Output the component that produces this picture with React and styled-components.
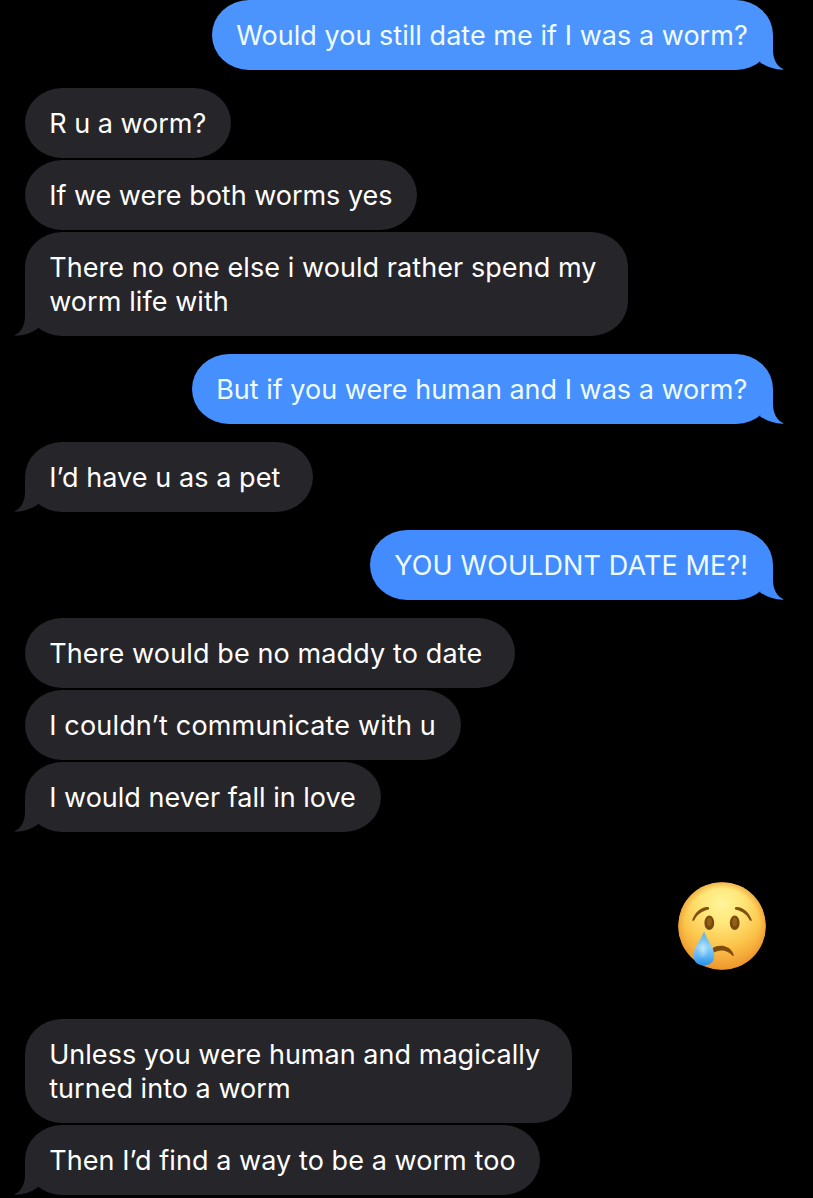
import React from 'react';
import styled, { createGlobalStyle } from 'styled-components';

const GlobalStyle = createGlobalStyle`
  body {
    margin: 0;
    background: #000;
    overflow: hidden;
  }
`;

const Thread = styled.main`
  display: flex;
  flex-direction: column;
  gap: 18px;
  box-sizing: border-box;
  width: 813px;
  height: 1198px;
  padding: 0 40px 0 25px;
  background: #000;
  overflow: hidden;
  font-family: Inter, 'Liberation Sans', sans-serif;
`;

const Group = styled.section`
  display: flex;
  flex-direction: column;
  gap: 2px;
  align-items: ${(props) => (props.$sent ? 'flex-end' : 'flex-start')};
`;

const Bubble = styled.div`
  position: relative;
  box-sizing: border-box;
  width: ${(props) => props.$width}px;
  padding: 19px 0 17px 24.2px;
  border-radius: 37px / 35px;
  background: ${(props) => props.$color};
  color: ${(props) => (props.$sent ? '#effcff' : '#fff')};
`;

const Text = styled.p`
  margin: 0;
  font-size: 27px;
  line-height: 34px;
  letter-spacing: ${(props) => props.$spacing || 0}px;
  white-space: pre;
`;

const TailShape = styled.svg`
  position: absolute;
  bottom: 0;
  ${(props) => (props.$sent ? 'right: -11px;' : 'left: -11px; transform: scaleX(-1);')}
`;

const Reaction = styled.div`
  display: flex;
  align-items: center;
  justify-content: flex-end;
  height: 187px;
  margin: -18px 0;
  padding-right: 7px;
`;

const Tail = ({ sent, color }) => (
  <TailShape $sent={sent} width='34' height='35' viewBox='0 0 34 35'>
    <path d='M10 0H23V15C23 23 26 31 34 34.6C26 35 18 32.6 10.2 27.4Z' fill={color} />
  </TailShape>
);

const CryingFace = () => (
  <svg width='88' height='88' viewBox='0 0 88 88' role='img' aria-label='Crying face'>
    <defs>
      <radialGradient id='face' cx='44' cy='22' r='68' gradientUnits='userSpaceOnUse'>
        <stop offset='0' stopColor='#fff59a' />
        <stop offset='0.3' stopColor='#ffe678' />
        <stop offset='0.62' stopColor='#fcc54c' />
        <stop offset='1' stopColor='#ec9228' />
      </radialGradient>
      <radialGradient id='rim' cx='44' cy='44' r='44' gradientUnits='userSpaceOnUse'>
        <stop offset='0.84' stopColor='#f0a030' stopOpacity='0' />
        <stop offset='1' stopColor='#e8962c' stopOpacity='0.6' />
      </radialGradient>
      <linearGradient id='tear' x1='0' y1='0' x2='0' y2='1'>
        <stop offset='0' stopColor='#5db0e4' />
        <stop offset='0.45' stopColor='#8fd2f8' />
        <stop offset='0.75' stopColor='#5ab2f4' />
        <stop offset='1' stopColor='#2b8ce4' />
      </linearGradient>
      <radialGradient id='shine' cx='0.5' cy='0.5' r='0.5'>
        <stop offset='0' stopColor='#d3f2ff' stopOpacity='0.8' />
        <stop offset='1' stopColor='#a9e0fc' stopOpacity='0' />
      </radialGradient>
    </defs>
    <circle cx='44' cy='44' r='43.8' fill='url(#face)' />
    <circle cx='44' cy='44' r='43.8' fill='url(#rim)' />
    <path d='M14.2 38C17 30 22.5 25.5 29.5 25C31.5 25 31.7 27.3 30 27.8C24 29.3 19.5 32 16.3 38.2C15.5 39.2 14 39 14.2 38Z' fill='#80500f' />
    <path d='M73.8 38C71 30 65.5 25.5 58.5 25C56.5 25 56.3 27.3 58 27.8C64 29.3 68.5 32 71.7 38.2C72.5 39.2 74 39 73.8 38Z' fill='#80500f' />
    <ellipse cx='31.3' cy='40.8' rx='4.9' ry='7.3' fill='#78490d' />
    <ellipse cx='56.7' cy='40.8' rx='4.9' ry='7.3' fill='#78490d' />
    <ellipse cx='31.3' cy='39.8' rx='2.4' ry='4.4' fill='#93601a' />
    <ellipse cx='56.7' cy='39.8' rx='2.4' ry='4.4' fill='#93601a' />
    <path d='M34 67C38 62.5 52 61.5 55.8 73C56 74 55 74.3 54.3 73.6C49 67.5 41 67.2 35 71Z' fill='#7e4b0c' />
    <path d='M26 49.5C23 58 15.5 65 15.5 73.5C15.5 80 20 83.5 26 83.5C32 83.5 36.3 80 36.3 73.5C36.3 65 29 58 26 49.5Z' fill='url(#tear)' />
    <ellipse cx='25' cy='67' rx='6' ry='10' fill='url(#shine)' />
  </svg>
);

const Message = ({ sent, tail, color = '#26252a', width, spacing, children }) => (
  <Bubble $sent={sent} $color={color} $width={width}>
    {tail ? <Tail sent={sent} color={color} /> : null}
    <Text $spacing={spacing}>{children}</Text>
  </Bubble>
);

const App = () => (
  <>
    <GlobalStyle />
    <Thread>
      <Group $sent>
        <Message sent tail color='#4b94fe' width={561} spacing={0.04}>Would you still date me if I was a worm?</Message>
      </Group>
      <Group>
        <Message width={206}>R u a worm?</Message>
        <Message width={392} spacing={-0.02}>If we were both worms yes</Message>
        <Message tail width={603} spacing={0.07}>{'There no one else i would rather spend my\nworm life with'}</Message>
      </Group>
      <Group $sent>
        <Message sent tail color='#458fff' width={581}>But if you were human and I was a worm?</Message>
      </Group>
      <Group>
        <Message tail width={288} spacing={0.07}>I’d have u as a pet</Message>
      </Group>
      <Group $sent>
        <Message sent tail color='#428cff' width={403} spacing={0.12}>YOU WOULDNT DATE ME?!</Message>
      </Group>
      <Group>
        <Message width={490} spacing={0.12}>There would be no maddy to date</Message>
        <Message width={436} spacing={0.17}>I couldn’t communicate with u</Message>
        <Message tail width={356}>I would never fall in love</Message>
      </Group>
      <Reaction>
        <CryingFace />
      </Reaction>
      <Group>
        <Message width={547} spacing={0.03}>{'Unless you were human and magically\nturned into a worm'}</Message>
        <Message tail width={515} spacing={0.07}>Then I’d find a way to be a worm too</Message>
      </Group>
    </Thread>
  </>
);

export default App;
